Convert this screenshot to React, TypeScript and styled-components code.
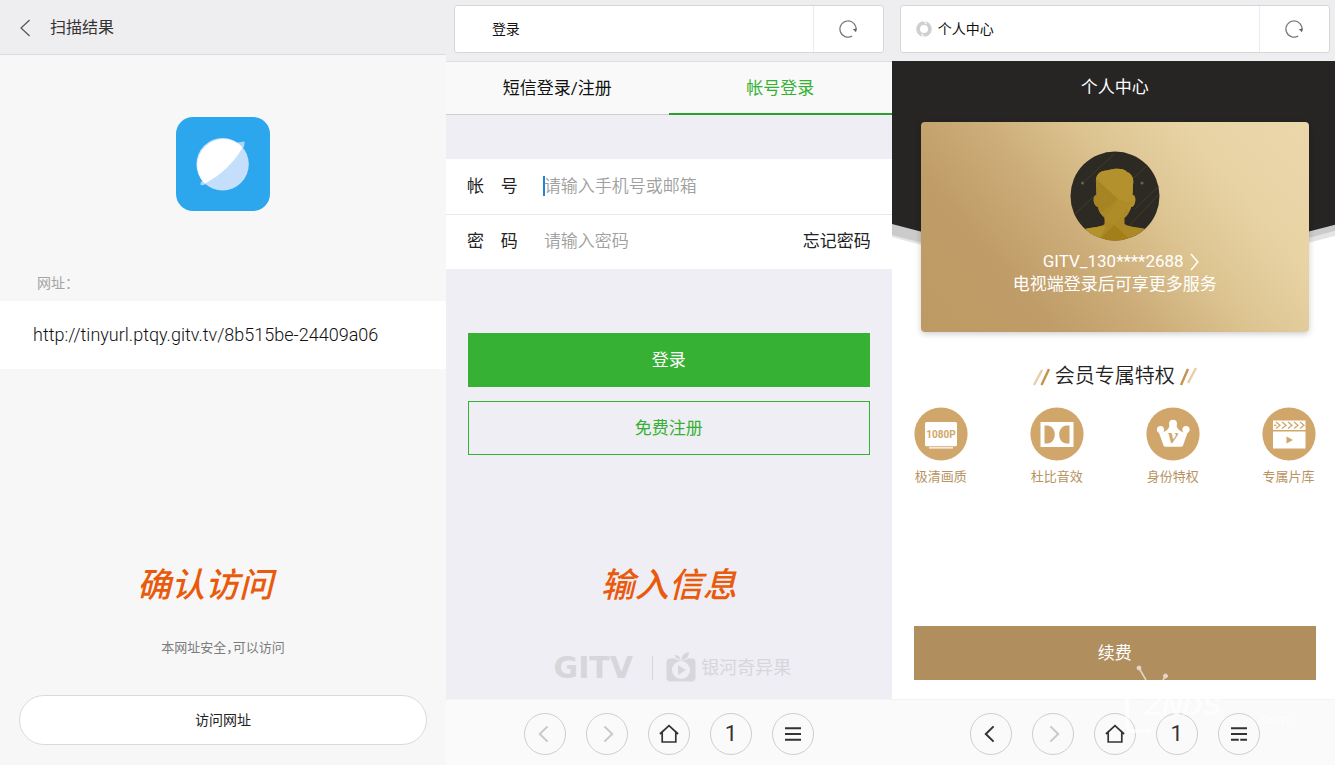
import React from "react";
import styled, { createGlobalStyle, css } from "styled-components";

const GlobalStyle = createGlobalStyle`
  *, *::before, *::after { box-sizing: border-box; }
  html, body { margin: 0; padding: 0; }
  body {
    font-family: Roboto, "Noto Sans CJK SC", sans-serif;
    line-height: 24px;
    color: #222;
    background: #f7f7f7;
  }
  button, input { font: inherit; color: inherit; margin: 0; }
  button { cursor: pointer; padding: 0; border: 0; background: none; }
  h1, h2, p, ul { margin: 0; padding: 0; font-weight: 400; }
  svg { display: block; }
`;

const GREEN = "#37b134";
const GOLD = "#d0a66b";

/* ---------- shared shell ---------- */

const Board = styled.main`
  display: flex;
  min-height: 100vh;
  overflow: hidden;
`;

const Phone = styled.section<{ $bg: string }>`
  position: relative;
  flex: 0 0 33.4%;
  display: flex;
  flex-direction: column;
  background: ${(p) => p.$bg};
`;

const Annotation = styled.p`
  font-size: 34px;
  line-height: 40px;
  font-style: italic;
  font-weight: 500;
  color: #e95a0c;
  text-align: center;
`;

/* ---------- browser chrome ---------- */

const AddressBar = styled.header`
  flex: none;
  height: 61px;
  padding: 5px 8px 8px;
  background: #eeeef0;
`;

const AddressBox = styled.div`
  display: flex;
  height: 48px;
  background: #fff;
  border: 1px solid #d6d6d9;
  border-radius: 3px;
`;

const AddressTitle = styled.div`
  flex: 1;
  display: flex;
  align-items: center;
  gap: 6px;
  padding-left: 15px;
  font-size: 14px;
  color: #111;
`;

const FaviconSlot = styled.span`
  width: 16px;
  height: 16px;
`;

const RefreshButton = styled.button`
  display: flex;
  align-items: center;
  justify-content: center;
  width: 70px;
  border-left: 1px solid #ececee;
`;

const NavBar = styled.nav`
  flex: none;
  display: flex;
  align-items: center;
  justify-content: center;
  gap: 20px;
  height: 66px;
  padding-top: 2px;
  background: #fafafa;
  border-top: 1px solid #f3f3f4;
`;

const NavButton = styled.button`
  display: flex;
  align-items: center;
  justify-content: center;
  width: 42px;
  height: 42px;
  border: 1px solid #cfcfcf;
  border-radius: 50%;
  color: #333;
  font-size: 22px;
  line-height: 24px;

  &:disabled {
    color: #c9c9c9;
    cursor: default;
  }
`;

const RefreshIcon = () => (
  <svg width="20" height="20" viewBox="0 0 20 20" fill="none" aria-hidden="true">
    <path d="M18 11.4A8.1 8.1 0 1 0 14.2 17" stroke="#777" strokeWidth="1.2" />
    <path d="M14.8 10.3 18.7 9.6 18 13.2Z" fill="#666" />
  </svg>
);

const FaviconRing = () => (
  <svg width="16" height="16" viewBox="0 0 16 16" fill="none" aria-hidden="true">
    <circle cx="8" cy="8" r="5.9" stroke="#cfcfcf" strokeWidth="3.8" />
    <path d="M8 0 10.4 3.2M8 16 5.6 12.8" stroke="#fff" strokeWidth="1.1" />
  </svg>
);

const BackIcon = () => (
  <svg width="20" height="20" viewBox="0 0 20 20" fill="none" stroke="currentColor" strokeWidth="2" aria-hidden="true">
    <path d="M12.6 2.4 4.8 10l7.8 7.6" />
  </svg>
);

const ForwardIcon = () => (
  <svg width="20" height="20" viewBox="0 0 20 20" fill="none" stroke="currentColor" strokeWidth="2" aria-hidden="true">
    <path d="M7.4 2.4 15.2 10l-7.8 7.6" />
  </svg>
);

const HomeIcon = () => (
  <svg width="20" height="20" viewBox="0 0 20 20" fill="none" stroke="currentColor" strokeWidth="1.7" aria-hidden="true">
    <path d="M.9 10 10 1.7 19.1 10M3.2 8.4V18H16.8V8.4" />
  </svg>
);

const MenuIcon = () => (
  <svg width="20" height="20" viewBox="0 0 20 20" stroke="currentColor" strokeWidth="2" aria-hidden="true">
    <path d="M2 4.2H18M2 10H18M2 15.8H18" />
  </svg>
);

function BrowserTop({ title, favicon }: { title: string; favicon?: boolean }) {
  return (
    <AddressBar>
      <AddressBox>
        <AddressTitle>
          <FaviconSlot>{favicon && <FaviconRing />}</FaviconSlot>
          <span>{title}</span>
        </AddressTitle>
        <RefreshButton type="button" aria-label="刷新">
          <RefreshIcon />
        </RefreshButton>
      </AddressBox>
    </AddressBar>
  );
}

function BrowserNav({ canGoBack }: { canGoBack?: boolean }) {
  return (
    <NavBar>
      <NavButton type="button" disabled={!canGoBack} aria-label="后退">
        <BackIcon />
      </NavButton>
      <NavButton type="button" disabled aria-label="前进">
        <ForwardIcon />
      </NavButton>
      <NavButton type="button" aria-label="主页">
        <HomeIcon />
      </NavButton>
      <NavButton type="button">1</NavButton>
      <NavButton type="button" aria-label="菜单">
        <MenuIcon />
      </NavButton>
    </NavBar>
  );
}

/* ---------- scan result ---------- */

const ScanHeader = styled.header`
  flex: none;
  display: flex;
  align-items: center;
  gap: 18px;
  height: 55px;
  padding: 2px 0 0 18px;
  background: #eeeef0;
  border-bottom: 1px solid #dcdcde;
`;

const ScanTitle = styled.h1`
  font-size: 16px;
  color: #333;
`;

const AppTile = styled.div`
  align-self: center;
  width: 94px;
  height: 94px;
  margin-top: 62px;
  border-radius: 17px;
  background: #2ca7ee;
`;

const UrlLabel = styled.p`
  margin-top: 62px;
  padding-left: 37px;
  font-size: 14px;
  line-height: 20px;
  color: #a3a3a3;
`;

const UrlRow = styled.p`
  margin-top: 8px;
  padding: 0 33px;
  font-size: 18px;
  font-weight: 300;
  line-height: 68px;
  color: #111;
  background: #fff;
`;

const ScanFooter = styled.div`
  display: flex;
  flex-direction: column;
  margin-top: auto;
  padding: 0 19px 20px;
`;

const ScanAnnotation = styled(Annotation)`
  padding-right: 36px;
`;

const SafeNote = styled.p`
  margin: 33px 0 37px;
  font-size: 13px;
  line-height: 20px;
  font-feature-settings: "halt";
  text-align: center;
  color: #7c7c7c;
`;

const VisitButton = styled.button`
  height: 50px;
  border: 1px solid #dadada;
  border-radius: 25px;
  background: #fff;
  font-size: 14px;
`;

function ScanResult() {
  return (
    <Phone $bg="#f7f7f7">
      <ScanHeader>
        <button type="button" aria-label="返回">
          <svg width="14" height="18" viewBox="0 0 14 18" fill="none" aria-hidden="true">
            <path d="M11.6 1 3 9l8.6 8" stroke="#555" strokeWidth="1.2" />
          </svg>
        </button>
        <ScanTitle>扫描结果</ScanTitle>
      </ScanHeader>
      <AppTile>
        <svg width="94" height="94" viewBox="0 0 94 94" aria-hidden="true">
          <path d="M61 25.5C64.500 25.500 68 24 68.500 24.800C69 28 67.500 31 66 33.500Z" fill="#a9d6fa" />
          <path d="M24.500 66.500C26 63 26.500 62.500 27.500 61.500L31.500 66.500C29 67.600 25.500 68.800 24.500 67.800Z" fill="#a9d6fa" />
          <circle cx="46.600" cy="47.300" r="26.200" fill="#c3dffb" />
          <path d="M28.500 66.500A26.200 26.200 0 1 1 66.500 30.200C62 40 46 58.500 28.500 66.500Z" fill="#fff" />
        </svg>
      </AppTile>
      <UrlLabel>网址：</UrlLabel>
      <UrlRow>http://tinyurl.ptqy.gitv.tv/8b515be-24409a06</UrlRow>
      <ScanFooter>
        <ScanAnnotation>确认访问</ScanAnnotation>
        <SafeNote>本网址安全，可以访问</SafeNote>
        <VisitButton type="button">访问网址</VisitButton>
      </ScanFooter>
    </Phone>
  );
}

/* ---------- login ---------- */

const Tabs = styled.div`
  display: flex;
  height: 54px;
  background: #f9f9f9;
  border-top: 1px solid #dedee0;
`;

const Tab = styled.button<{ $active?: boolean }>`
  flex: 1;
  font-size: 17px;
  color: #111;
  border-bottom: 1px solid #cdcdd0;
  ${(p) =>
    p.$active &&
    css`
      padding-top: 1px;
      color: ${GREEN};
      border-bottom: 2px solid #2ba02a;
    `}
`;

const LoginForm = styled.form`
  margin-top: 44px;
`;

const Field = styled.div`
  display: flex;
  align-items: center;
  height: 55px;
  padding: 0 21px 2px;
  font-size: 17px;
  background: #fff;

  & + & {
    border-top: 1px solid #e8e8ea;
  }
`;

const FieldLabel = styled.label`
  width: 76px;
`;

const Caret = styled.span`
  width: 2px;
  height: 20px;
  margin-right: -2px;
  background: #1b84dc;
`;

const TextInput = styled.input`
  flex: 1;
  min-width: 0;
  height: 24px;
  padding: 0 0 0 1px;
  border: 0;
  outline: 0;
  background: transparent;

  &::placeholder {
    color: #a0a0a0;
    font-weight: 350;
    opacity: 1;
  }
`;

const ForgotLink = styled.a`
  color: #222;
  text-decoration: none;
`;

const LoginActions = styled.div`
  display: flex;
  flex-direction: column;
  gap: 14px;
  padding: 64px 22px 0;
`;

const WideButton = styled.button<{ $outline?: boolean }>`
  height: 54px;
  font-size: 17px;
  border: 1px solid ${GREEN};
  color: ${(p) => (p.$outline ? GREEN : "#fff")};
  background: ${(p) => (p.$outline ? "transparent" : GREEN)};
`;

const BrandFooter = styled.footer`
  margin-top: auto;
`;

const Brand = styled.div`
  display: flex;
  align-items: center;
  justify-content: center;
  height: 38px;
  margin: 44px 0 12px;
  color: #d6d6db;
`;

const BrandName = styled.span`
  width: 94px;
  font-family: "DejaVu Sans", sans-serif;
  font-size: 30px;
  font-weight: 700;
  line-height: 32px;
  text-align: center;
`;

const BrandRule = styled.span`
  width: 1px;
  height: 24px;
  margin: 0 12px;
  background: #d6d6db;
`;

const BrandSub = styled.span`
  padding-left: 4px;
  font-size: 18px;
  line-height: 32px;
`;

function Login() {
  return (
    <Phone $bg="#efeef5">
      <BrowserTop title="登录" />
      <Tabs role="tablist">
        <Tab type="button" role="tab">短信登录/注册</Tab>
        <Tab type="button" role="tab" aria-selected $active>
          帐号登录
        </Tab>
      </Tabs>
      <LoginForm>
        <Field>
          <FieldLabel htmlFor="account">帐　号</FieldLabel>
          <Caret />
          <TextInput id="account" type="text" placeholder="请输入手机号或邮箱" />
        </Field>
        <Field>
          <FieldLabel htmlFor="password">密　码</FieldLabel>
          <TextInput id="password" type="password" placeholder="请输入密码" />
          <ForgotLink href="#forgot">忘记密码</ForgotLink>
        </Field>
        <LoginActions>
          <WideButton type="button">登录</WideButton>
          <WideButton type="button" $outline>
            免费注册
          </WideButton>
        </LoginActions>
      </LoginForm>
      <BrandFooter>
        <Annotation>输入信息</Annotation>
        <Brand>
          <BrandName>GITV</BrandName>
          <BrandRule />
          <svg width="32" height="32" viewBox="0 0 32 32" aria-hidden="true">
            <path
              d="M5 6.500H10C12 8 14 8.500 16 8.500C18.500 8.500 21 8 23 6.500H26.500Q30.500 6.500 30.500 10.500V25.500Q30.500 29.500 26.500 29.500H5.500Q1.500 29.500 1.500 25.500V10.500Q1.500 6.500 5 6.500Z"
              fill="currentColor"
            />
            <circle cx="16" cy="18" r="9" fill="#efeef5" />
            <path d="M13 13 21 18 13 23Z" fill="currentColor" />
            <path d="M9.500 3C13 3 15 4.500 15.500 7.500C12.500 7.500 10.500 6 9.500 3Z" fill="currentColor" />
            <path d="M16.500 8C16.500 3 19.500 1 24 0C23.800 4.800 21.500 8 16.500 8Z" fill="currentColor" />
          </svg>
          <BrandSub>银河奇异果</BrandSub>
        </Brand>
      </BrandFooter>
      <BrowserNav />
    </Phone>
  );
}

/* ---------- member centre ---------- */

const Hero = styled.div`
  position: relative;
`;

const Backdrop = styled.svg`
  position: absolute;
  top: 0;
  left: 0;
  width: 100%;
  height: 200px;
`;

const HeroContent = styled.div`
  position: relative;
  padding: 0 29px;
`;

const HeroTitle = styled.h1`
  font-size: 17px;
  line-height: 52px;
  padding-bottom: 9px;
  text-align: center;
  color: #fff;
`;

const MemberCard = styled.div`
  display: flex;
  flex-direction: column;
  align-items: center;
  height: 210px;
  padding-top: 29px;
  border-radius: 4px;
  color: #fff;
  font-size: 17px;
  line-height: 23px;
  background: linear-gradient(50deg, #bd9963 0%, #c09d68 24%, #cbab77 40%, #ddc592 60%, #e8d3a5 78%, #ebd7aa 100%);
  box-shadow: 0 2px 6px rgba(0, 0, 0, 0.2);
`;

const MemberName = styled.a`
  display: flex;
  align-items: center;
  gap: 6px;
  margin: 9px 0 0 12px;
  color: inherit;
  text-decoration: none;
`;

const PerksHeading = styled.h2`
  display: flex;
  align-items: center;
  justify-content: center;
  gap: 4px;
  margin-top: 30px;
  font-size: 20px;
  font-weight: 350;
  line-height: 28px;
`;

const PerkList = styled.ul`
  display: flex;
  justify-content: space-between;
  margin-top: 17px;
  padding: 0 22px;
  list-style: none;
`;

const Perk = styled.li`
  display: flex;
  flex-direction: column;
  align-items: center;
  gap: 6px;
  width: 54px;
  font-size: 13px;
  line-height: 20px;
  white-space: nowrap;
  color: #b8935f;
`;

const RenewArea = styled.div`
  display: flex;
  flex-direction: column;
  margin-top: auto;
  padding: 0 22px 19px;
`;

const RenewButton = styled.button`
  height: 54px;
  font-size: 17px;
  color: #fff;
  background: #b18e5d;
`;

const Watermark = styled.svg`
  position: absolute;
  right: 0;
  bottom: 0;
  pointer-events: none;
`;

const Avatar = () => (
  <svg width="90" height="90" viewBox="0 0 90 90" aria-hidden="true">
    <defs>
      <clipPath id="avatar-disc">
        <circle cx="45" cy="45" r="44.500" />
      </clipPath>
      <clipPath id="avatar-man">
        <path d="M26 32C25 24 30 19.500 37 19.500C45 17 54 17 57 21C62 23 64 27 63 34L62.500 44C67 44 66 56 61 56C60 61 57 65 54.500 67V73C60 76.500 72 76 78 79V90H12V79C20 76 31 76.500 34.500 73V67C31 64 28.500 60 28 56C23 55 22 44 26.500 44Z" />
      </clipPath>
    </defs>
    <g clipPath="url(#avatar-disc)">
      <rect width="90" height="90" fill="#2d2923" />
      <path d="M13 32 44 3M4 64 24 45M60 74 88 44M58 32 78 14M65 58 90 34" stroke="#423d2e" strokeWidth="1" />
      <circle cx="12.500" cy="32" r="1.600" fill="#5f6350" />
      <circle cx="72" cy="32" r="1.600" fill="#5f6350" />
      <g clipPath="url(#avatar-man)">
        <rect width="90" height="90" fill="#ac8927" />
        <path d="M26 28 66 66V10H26Z" fill="#b3912c" />
        <path d="M26 28 48 48 26 66H18Z" fill="#a68424" />
        <path d="M62 52 44 74 34 68 48 48Z" fill="#ae8c28" />
        <path d="M44 74 62 90H28Z" fill="#a37e19" />
        <path d="M12 90V70L36 76 28 90Z" fill="#b4922c" />
      </g>
    </g>
  </svg>
);

const Slashes = ({ flip }: { flip?: boolean }) => (
  <svg width="19" height="20" viewBox="0 0 19 20" strokeWidth="2.400" aria-hidden="true">
    <path d={flip ? "M2 19 9 3" : "M9.500 19 17 3"} stroke="#c4934f" />
    <path d={flip ? "M9 17 17 2" : "M2 19 10 4"} stroke="#e6cfaa" />
  </svg>
);

const PerkDisc = ({ children }: { children: React.ReactNode }) => (
  <svg width="54" height="54" viewBox="0 0 54 54" aria-hidden="true">
    <circle cx="27" cy="27" r="26.600" fill={GOLD} />
    {children}
  </svg>
);

const perks = [
  {
    label: "极清画质",
    art: (
      <>
        <path d="M12.500 15H41.500Q43 15 43 16.500V38Q43 39.200 41.500 39.200H12.500Q11 39.200 11 38V16.500Q11 15 12.500 15ZM15 40.300H39V41.500H15Z" fill="#fff" />
        <text x="27" y="31" textAnchor="middle" fontFamily="Roboto, sans-serif" fontSize="10" fontWeight="700" fill={GOLD}>
          1080P
        </text>
      </>
    ),
  },
  {
    label: "杜比音效",
    art: (
      <>
        <rect x="10.500" y="15" width="33" height="25" fill="#fff" />
        <path d="M14.500 18.500H17.500C21.500 18.500 24.800 22.500 24.800 27.500S21.500 36.500 17.500 36.500H14.500ZM39.500 18.500H36.500C32.500 18.500 29.200 22.500 29.200 27.500S32.500 36.500 36.500 36.500H39.500Z" fill={GOLD} />
      </>
    ),
  },
  {
    label: "身份特权",
    art: (
      <>
        <g fill="#fff">
          <circle cx="14.500" cy="22.500" r="3.600" />
          <circle cx="27" cy="16.800" r="4" />
          <circle cx="40" cy="22.500" r="3.600" />
          <path d="M12.500 24.500C16 26.500 22 24.500 23.800 18H30.200C32 24.500 38 26.500 42 24.500L37 38.500Q36.600 39.800 35 39.800H19.500Q18 39.800 17.500 38.500Z" />
        </g>
        <text x="27" y="36" textAnchor="middle" fontFamily="Liberation Serif, serif" fontSize="22" fontWeight="700" fontStyle="italic" fill={GOLD}>
          v
        </text>
      </>
    ),
  },
  {
    label: "专属片库",
    art: (
      <>
        <rect x="11" y="13.500" width="32.500" height="9.500" fill="#fff" />
        <rect x="11" y="24.500" width="32.500" height="17" fill="#fff" />
        <path d="M24.500 29.500 31 33 24.500 36.500Z" fill={GOLD} />
        <path d="M12 18.300H14.500M14 15 18 18.300 14 21.500M20 15 24 18.300 20 21.500M26 15 30 18.300 26 21.500M32 15 36 18.300 32 21.500M38 15 42 18.300 38 21.500" fill="none" stroke={GOLD} strokeWidth="1.300" />
      </>
    ),
  },
];

function MemberCentre() {
  return (
    <Phone $bg="#fff">
      <BrowserTop title="个人中心" favicon />
      <Hero>
        <Backdrop viewBox="0 0 446 200" preserveAspectRatio="none" aria-hidden="true">
          <path d="M0 0H446V174Q223 240 0 176Z" fill="#e4e4e4" />
          <path d="M0 0H446V169Q223 236 0 174Z" fill="#cbcbcb" />
          <path d="M0 0H446V163Q223 226 0 163Z" fill="#262524" />
        </Backdrop>
        <HeroContent>
          <HeroTitle>个人中心</HeroTitle>
          <MemberCard>
            <Avatar />
            <MemberName href="#profile">
              GITV_130****2688
              <svg width="9" height="18" viewBox="0 0 9 18" fill="none" aria-hidden="true">
                <path d="M1 1 7.800 9 1 17" stroke="#fff" strokeWidth="1.500" />
              </svg>
            </MemberName>
            <p>电视端登录后可享更多服务</p>
          </MemberCard>
        </HeroContent>
      </Hero>
      <PerksHeading>
        <Slashes />
        会员专属特权
        <Slashes flip />
      </PerksHeading>
      <PerkList>
        {perks.map((perk) => (
          <Perk key={perk.label}>
            <PerkDisc>{perk.art}</PerkDisc>
            {perk.label}
          </Perk>
        ))}
      </PerkList>
      <RenewArea>
        <RenewButton type="button">续费</RenewButton>
      </RenewArea>
      <BrowserNav canGoBack />
      <Watermark width="223" height="110" viewBox="0 0 223 110" aria-hidden="true">
        <g stroke="#fff" fill="#fff" opacity="0.650">
          <circle cx="24" cy="13" r="2" />
          <circle cx="50.500" cy="21" r="2" />
          <path d="M24 13 31 25M50.500 21 48 25" strokeWidth="1.500" />
          <path d="M28 32H14Q12 32 12 35V72Q12 76 16 76H36" fill="none" strokeWidth="4" />
        </g>
        <text x="30" y="60" fontFamily="Liberation Sans" fontSize="28" fontWeight="700" fontStyle="italic" fill="#fff" opacity="0.700">
          ZNDS
        </text>
        <text x="142" y="69" fontFamily="Liberation Sans" fontSize="14" fontWeight="700" fontStyle="italic" fill="#fff" opacity="0.700">
          .com
        </text>
        <path d="M124.500 82V88" stroke="#fafafa" strokeWidth="1.500" />
      </Watermark>
    </Phone>
  );
}

export default function App() {
  return (
    <>
      <GlobalStyle />
      <Board>
        <ScanResult />
        <Login />
        <MemberCentre />
      </Board>
    </>
  );
}
